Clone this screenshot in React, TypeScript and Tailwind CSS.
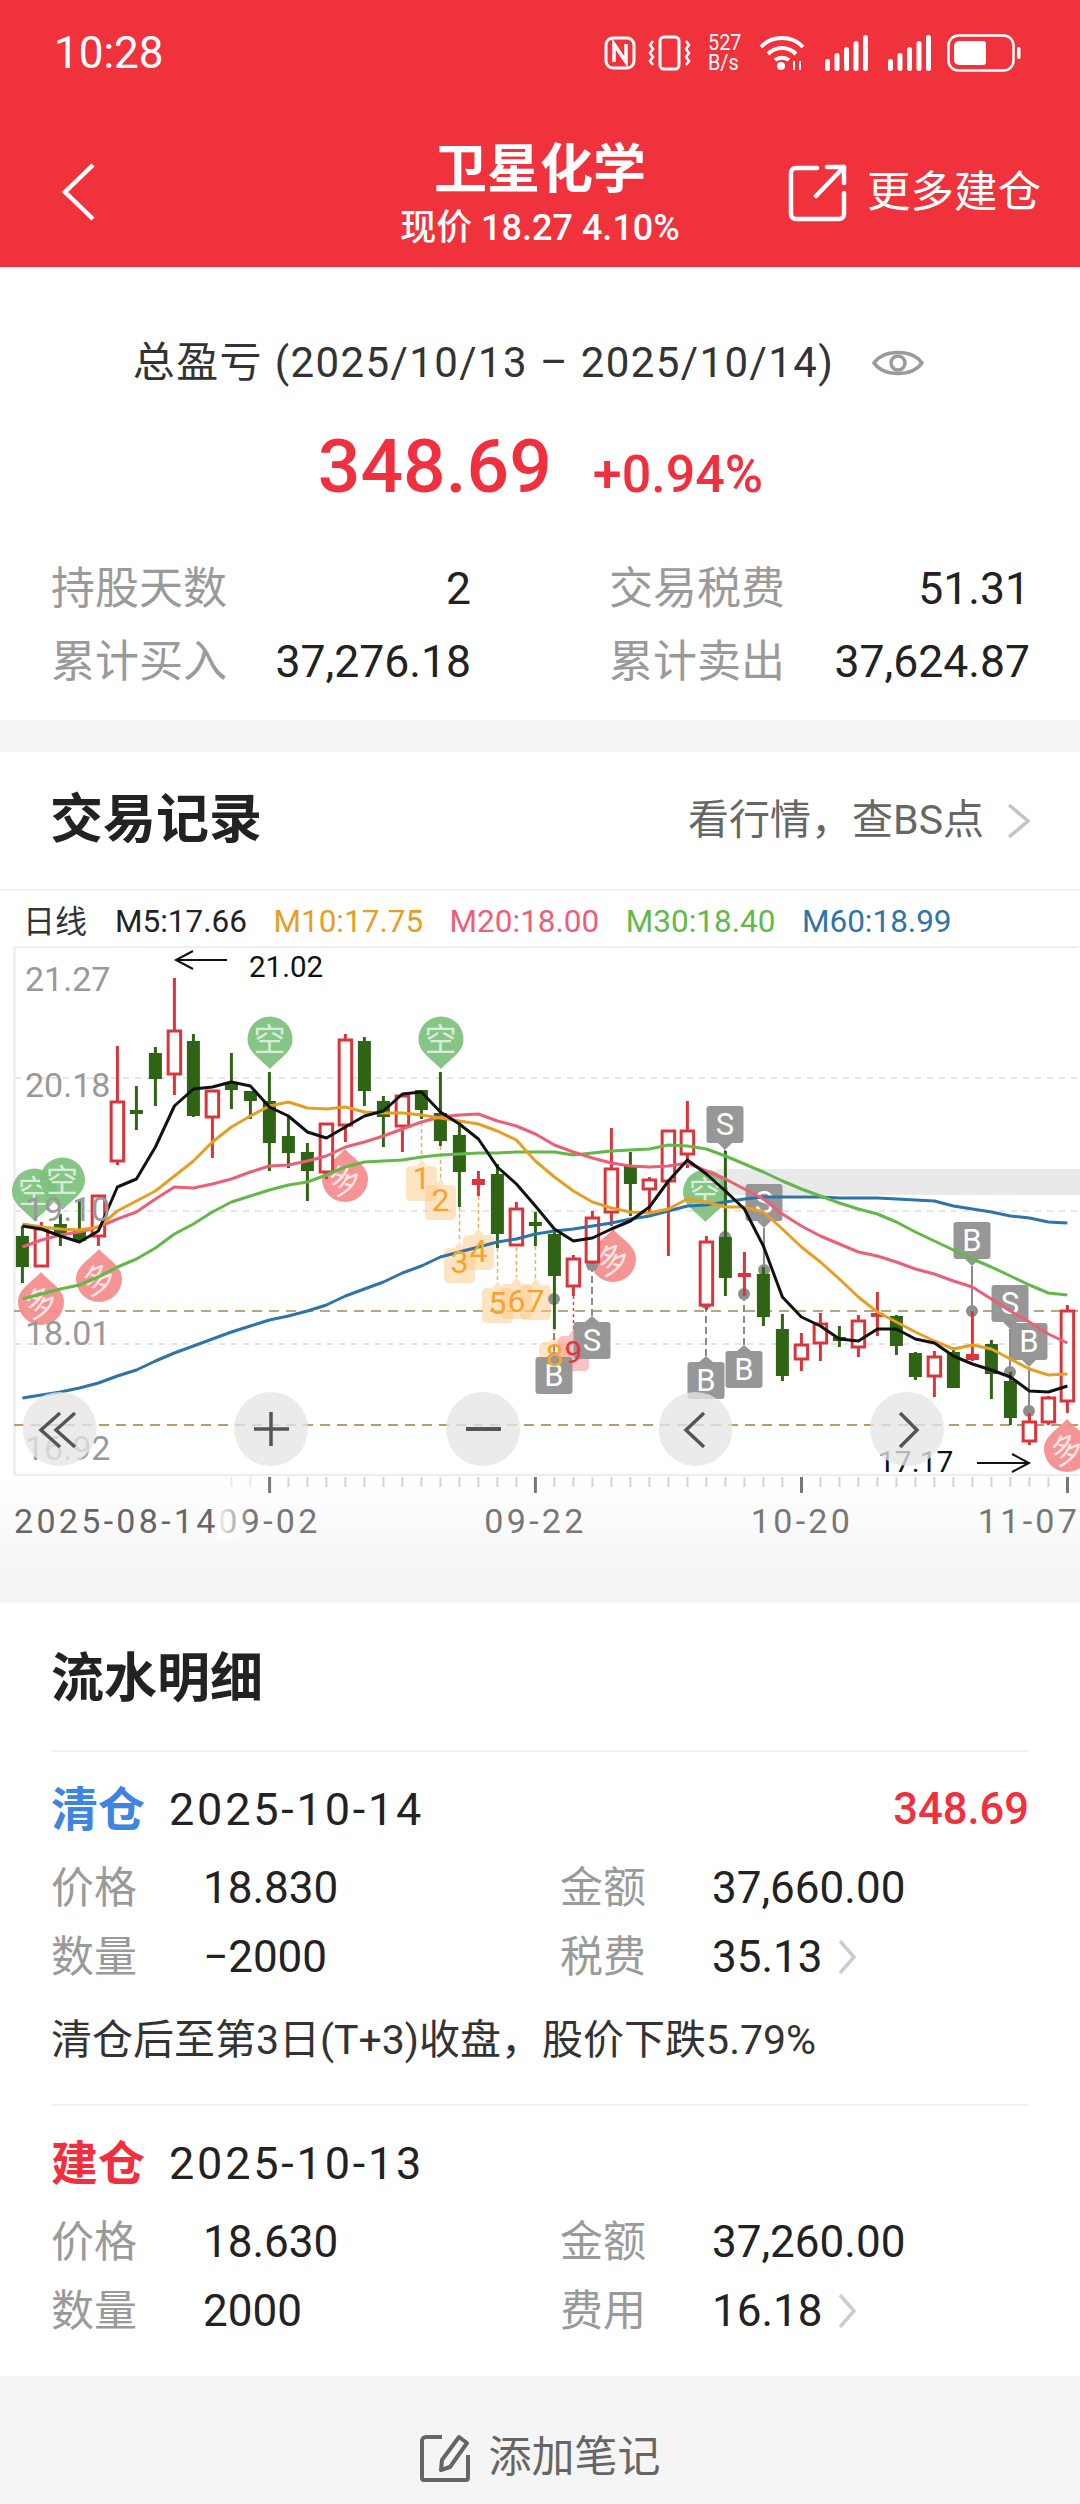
import React from 'react';

type Candle = [number, number, number, number, 'r' | 'g'];

// high, body top, body bottom, low, colour — one entry per trading day
const candles: Candle[] = [
  [1227, 1237, 1268, 1284, 'g'], [1223, 1230, 1267, 1267, 'r'], [1215, 1225, 1235, 1247, 'g'], [1202, 1230, 1242, 1243, 'g'],
  [1197, 1197, 1237, 1247, 'r'], [1047, 1103, 1162, 1166, 'r'], [1087, 1111, 1115, 1131, 'g'], [1048, 1054, 1080, 1107, 'g'],
  [979, 1032, 1075, 1096, 'r'], [1035, 1042, 1117, 1118, 'g'], [1092, 1092, 1118, 1159, 'r'], [1054, 1085, 1091, 1110, 'g'],
  [1092, 1092, 1102, 1120, 'g'], [1073, 1102, 1144, 1172, 'g'], [1118, 1137, 1154, 1169, 'g'], [1144, 1153, 1172, 1202, 'g'],
  [1125, 1125, 1173, 1180, 'r'], [1035, 1041, 1126, 1143, 'r'], [1038, 1042, 1092, 1107, 'g'], [1097, 1102, 1118, 1148, 'g'],
  [1097, 1097, 1127, 1153, 'r'], [1091, 1091, 1111, 1120, 'g'], [1073, 1114, 1142, 1147, 'g'], [1122, 1136, 1173, 1208, 'g'],
  [1172, 1180, 1186, 1197, 'r'], [1165, 1175, 1235, 1249, 'g'], [1203, 1210, 1246, 1247, 'r'], [1213, 1223, 1227, 1247, 'g'],
  [1230, 1235, 1277, 1330, 'g'], [1256, 1260, 1287, 1297, 'r'], [1212, 1219, 1263, 1265, 'r'], [1129, 1170, 1213, 1227, 'r'],
  [1153, 1167, 1185, 1217, 'g'], [1178, 1181, 1190, 1213, 'r'], [1132, 1132, 1182, 1257, 'r'], [1102, 1132, 1155, 1169, 'r'],
  [1237, 1243, 1306, 1311, 'r'], [1152, 1238, 1279, 1297, 'g'], [1253, 1274, 1278, 1297, 'r'], [1268, 1275, 1318, 1327, 'g'],
  [1315, 1330, 1377, 1382, 'g'], [1334, 1346, 1360, 1372, 'r'], [1314, 1325, 1344, 1362, 'r'], [1327, 1338, 1342, 1348, 'g'],
  [1316, 1322, 1348, 1358, 'r'], [1293, 1314, 1318, 1337, 'r'], [1316, 1317, 1347, 1356, 'g'], [1353, 1354, 1378, 1381, 'g'],
  [1352, 1358, 1377, 1398, 'r'], [1348, 1353, 1389, 1389, 'g'], [1312, 1355, 1361, 1362, 'r'], [1341, 1345, 1375, 1400, 'g'],
  [1373, 1382, 1419, 1426, 'g'], [1414, 1423, 1442, 1446, 'r'], [1397, 1399, 1423, 1426, 'r'], [1306, 1312, 1402, 1414, 'r'],
];

const dayX = (i: number) => 22.4 + 19 * i;

const ma5 = [1227, 1230, 1237, 1243, 1232, 1188, 1180, 1148, 1107, 1090, 1088, 1083, 1087, 1108, 1117, 1133, 1139, 1128, 1117, 1112, 1095, 1093, 1113, 1125, 1140, 1168, 1185, 1207, 1230, 1242, 1239, 1230, 1222, 1208, 1182, 1161, 1175, 1192, 1210, 1247, 1298, 1318, 1327, 1340, 1342, 1330, 1330, 1340, 1344, 1357, 1365, 1371, 1378, 1392, 1393, 1387];
const ma10 = [1225, 1228, 1230, 1231, 1228, 1212, 1202, 1192, 1177, 1162, 1143, 1128, 1117, 1107, 1103, 1109, 1110, 1108, 1113, 1114, 1114, 1116, 1119, 1122, 1125, 1132, 1141, 1162, 1178, 1192, 1203, 1209, 1213, 1214, 1210, 1200, 1203, 1208, 1208, 1213, 1230, 1248, 1263, 1280, 1298, 1313, 1323, 1333, 1342, 1350, 1346, 1350, 1360, 1370, 1376, 1375];
const ma20 = [1248, 1241, 1236, 1233, 1228, 1220, 1213, 1200, 1188, 1189, 1185, 1180, 1173, 1167, 1166, 1162, 1157, 1148, 1143, 1137, 1130, 1123, 1118, 1116, 1115, 1122, 1127, 1135, 1146, 1153, 1159, 1164, 1167, 1168, 1167, 1164, 1172, 1180, 1190, 1200, 1215, 1227, 1237, 1245, 1253, 1257, 1263, 1270, 1275, 1282, 1288, 1300, 1312, 1323, 1335, 1344];
const ma30 = [1300, 1295, 1290, 1286, 1278, 1268, 1260, 1249, 1235, 1225, 1213, 1203, 1197, 1191, 1186, 1183, 1176, 1168, 1163, 1162, 1161, 1158, 1156, 1155, 1154, 1154, 1153, 1153, 1153, 1156, 1154, 1152, 1151, 1150, 1146, 1147, 1150, 1157, 1165, 1173, 1182, 1190, 1197, 1204, 1210, 1215, 1223, 1233, 1242, 1251, 1260, 1268, 1277, 1286, 1294, 1296];
const ma60 = [1399, 1396, 1393, 1389, 1384, 1377, 1371, 1362, 1354, 1347, 1340, 1333, 1327, 1321, 1317, 1312, 1306, 1297, 1290, 1283, 1274, 1267, 1258, 1253, 1248, 1243, 1240, 1235, 1232, 1230, 1227, 1224, 1220, 1217, 1212, 1207, 1206, 1203, 1200, 1198, 1198, 1198, 1198, 1199, 1199, 1199, 1200, 1201, 1202, 1207, 1210, 1213, 1217, 1219, 1223, 1224];

const maLines: [number[], string][] = [
  [ma60, '#2f74a8'],
  [ma30, '#62b948'],
  [ma20, '#ec5f78'],
  [ma10, '#e5a024'],
  [ma5, '#111111'],
];

const points = (ys: number[]) => ys.map((y, i) => `${dayX(i)},${y}`).join(' ');

const priceLabels: [string, number][] = [['21.27', 992], ['20.18', 1098], ['19.10', 1222], ['18.01', 1346], ['16.92', 1461]];
const orderTags: [string, number, number, number, number][] = [
  // label, x, tag top, line start, text baseline
  ['1', 421.5, 1160, 1123, 1190],
  ['2', 440.5, 1179, 1147, 1212],
  ['3', 459.5, 1242, 1208, 1274],
  ['4', 478.5, 1229, 1197, 1263],
  ['5', 497.5, 1282, 1249, 1315],
  ['6', 516.5, 1278, 1248, 1313],
  ['7', 535.5, 1279, 1247, 1313],
  ['8', 554.5, 1336, 1300, 1367],
];

// grey buy/sell flags: label, x, box top, anchor dot y, pointer direction
const flags: [string, number, number, number, 'up' | 'down'][] = [
  ['S', 725, 1107, 1238, 'down'],
  ['S', 764, 1185, 1271, 'down'],
  ['S', 592, 1323, 1266, 'up'],
  ['B', 554, 1358, 1300, 'up'],
  ['B', 706, 1363, 1304, 'up'],
  ['B', 744, 1352, 1295, 'up'],
  ['B', 972, 1223, 1312, 'down'],
  ['S', 1010, 1286, 1373, 'down'],
  ['B', 1029, 1324, 1412, 'down'],
];

const shortPins: [number, number][] = [[34, 1192], [62, 1181], [269.5, 1040], [440.5, 1040], [705, 1193]];
const longPins: [number, number][] = [[41, 1303], [99, 1280], [345, 1180], [613, 1260], [1067, 1450]];

const sans = "font-[Roboto,'Noto_Sans_CJK_SC',sans-serif]";

const StatusIcons: React.FC = () => (
  <div className="mt-[6px] flex items-center text-white">
    <svg width="32" height="34" viewBox="0 0 32 34" fill="none" stroke="currentColor" strokeWidth="3">
      <rect x="2" y="2" width="28" height="30" rx="7" />
      <path d="M10 26V8l12 18V8" strokeWidth="3.5" />
    </svg>
    <svg className="ml-3" width="43" height="36" viewBox="0 0 43 36" fill="none" stroke="currentColor" strokeWidth="3">
      <rect x="12" y="2" width="19" height="32" rx="4" />
      <path d="M5 6l-3 4 3 4-3 4 3 4-3 4 3 4M38 6l3 4-3 4 3 4-3 4 3 4-3 4" strokeWidth="2.5" />
    </svg>
    <div className="ml-[17px] w-9 text-[22px] leading-[20px] font-[Roboto,sans-serif] font-normal scale-x-90 origin-left">
      <div>527</div>
      <div>B/s</div>
    </div>
    <svg className="ml-[15px]" width="46" height="36" viewBox="0 0 46 36" fill="none" stroke="currentColor" strokeWidth="4">
      <path d="M2 12C13 0 33 0 44 12M9 19c8-8 20-8 28 0M16 25c4-3 10-3 14 0" />
      <circle cx="22" cy="31" r="4" fill="currentColor" stroke="none" />
      <path d="M35 26v9M41 26v9" strokeWidth="2" />
    </svg>
    <svg className="ml-[20px]" width="44" height="36" viewBox="0 0 44 36" fill="currentColor">
      <rect x="0" y="24" width="5" height="12" rx="2.5" />
      <rect x="9.5" y="18" width="5" height="18" rx="2.5" />
      <rect x="19" y="12" width="5" height="24" rx="2.5" />
      <rect x="28.5" y="6" width="5" height="30" rx="2.5" />
      <rect x="38" y="0" width="5" height="36" rx="2.5" />
    </svg>
    <svg className="ml-[19px]" width="44" height="36" viewBox="0 0 44 36" fill="currentColor">
      <rect x="0" y="24" width="5" height="12" rx="2.5" />
      <rect x="9.5" y="18" width="5" height="18" rx="2.5" />
      <rect x="19" y="12" width="5" height="24" rx="2.5" />
      <rect x="28.5" y="6" width="5" height="30" rx="2.5" />
      <rect x="38" y="0" width="5" height="36" rx="2.5" />
    </svg>
    <svg className="ml-[15px]" width="74" height="38" viewBox="0 0 74 38" fill="none">
      <rect x="1.5" y="1.5" width="65" height="35" rx="10" stroke="currentColor" strokeWidth="2.5" />
      <path d="M12 7h24a3 3 0 0 1 3 3v18a3 3 0 0 1-3 3H12a5 5 0 0 1-5-5V12a5 5 0 0 1 5-5z" fill="currentColor" />
      <rect x="70" y="13" width="3.5" height="12" rx="1.7" fill="currentColor" />
    </svg>
  </div>
);

const Header: React.FC = () => (
  <header className="h-[267px] bg-[#f0323c] text-white">
    <div className="flex h-[100px] items-center justify-between pl-[54px] pr-[59px]">
      <span className="mt-[5px] text-[44px] leading-none font-[Roboto,sans-serif]">10:28</span>
      <StatusIcons />
    </div>
    <div className="grid h-[167px] grid-cols-[1fr_auto_1fr] items-start">
      <div className="pl-[60px] pt-[62px]">
        <svg width="36" height="60" viewBox="0 0 36 60" fill="none" stroke="white" strokeWidth="4.5">
          <path d="M33 3L5 30l28 27" />
        </svg>
      </div>
      <div className="flex flex-col items-center pt-[41px]">
        <div className="text-[53px] leading-[58px] font-bold">卫星化学</div>
        <div className="mt-[9px] text-[36px] leading-[40px] font-medium whitespace-nowrap">现价 18.27 4.10%</div>
      </div>
      <div className="flex items-center justify-end pr-[39px] pt-[63px]">
        <svg width="60" height="60" viewBox="0 0 60 60" fill="none" stroke="white" strokeWidth="4.5" strokeLinecap="round" strokeLinejoin="round">
          <path d="M30 5H9a5 5 0 0 0-5 5v41a5 5 0 0 0 5 5h43a5 5 0 0 0 5-5V30M57 4L29 33M40 4h17v16" />
        </svg>
        <span className="ml-[20px] text-[43.5px] leading-[60px] whitespace-nowrap">更多建仓</span>
      </div>
    </div>
  </header>
);

const StatRow: React.FC<{ label: string; value: string }> = ({ label, value }) => (
  <div className="flex items-center justify-between leading-[60px]">
    <span className="text-[44px] text-[#9a9a9a]">{label}</span>
    <span className="text-[44.5px] text-[#222]">{value}</span>
  </div>
);

const Summary: React.FC = () => (
  <section className="h-[453px] bg-white px-[51px] pt-[71px]">
    <div className="flex items-center justify-center pr-[23px] leading-[50px]">
      <span className="text-[42px] tracking-[1.4px] text-[#333] whitespace-nowrap">总盈亏 (2025/10/13 – 2025/10/14)</span>
      <svg className="ml-[38px]" width="52" height="38" viewBox="0 0 52 38" fill="none" stroke="#9a9a9a" strokeWidth="3.5">
        <path d="M2 19C12 5 40 5 50 19 40 33 12 33 2 19z" />
        <circle cx="26" cy="19" r="7" />
      </svg>
    </div>
    <div className="mt-[38px] flex items-baseline justify-center pl-[1px] leading-[80px] text-[#f0303f] font-medium">
      <span className="text-[75px]">348.69</span>
      <span className="ml-[41px] text-[52px]">+0.94%</span>
    </div>
    <div className="mt-[44px] grid grid-cols-[420px_421px] gap-x-[138px] gap-y-[13px]">
      <StatRow label="持股天数" value="2" />
      <StatRow label="交易税费" value="51.31" />
      <StatRow label="累计买入" value="37,276.18" />
      <StatRow label="累计卖出" value="37,624.87" />
    </div>
  </section>
);

const PinText: React.FC<{ x: number; y: number; fill: string; rotate?: number; children: string }> = ({ x, y, fill, rotate = 0, children }) => (
  <text x={x} y={y} fill={fill} fontSize="32" textAnchor="middle" fontFamily="'Noto Sans CJK SC',sans-serif" transform={`rotate(${rotate} ${x} ${y - 11})`}>
    {children}
  </text>
);

const KLineChart: React.FC = () => (
  <svg className="block" width="1080" height="625" viewBox="0 947 1080 625" fontFamily="Roboto,sans-serif">
    <defs>
      <linearGradient id="axisFade" x1="0" y1="0" x2="0" y2="1">
        <stop offset="0" stopColor="#ffffff" />
        <stop offset="1" stopColor="#f6f6f6" />
      </linearGradient>
      <linearGradient id="dateFade" x1="0" y1="0" x2="1" y2="0">
        <stop offset="0" stopColor="#ffffff" stopOpacity="0.9" />
        <stop offset="1" stopColor="#ffffff" stopOpacity="0" />
      </linearGradient>
    </defs>
    <rect x="0" y="1477" width="1080" height="95" fill="url(#axisFade)" />
    <rect x="716" y="1170" width="364" height="26" fill="#e9e9e9" />
    <path d="M1079 948H14.5V1476H1079" fill="none" stroke="#eeeeee" strokeWidth="2.5" />

    {[1079, 1212, 1345].map((y) => (
      <line key={y} x1="15" x2="1080" y1={y} y2={y} stroke="#dddddd" strokeWidth="1.5" strokeDasharray="6 6" />
    ))}
    <line x1="14" x2="1080" y1="1312" y2="1312" stroke="#bba67f" strokeWidth="2" strokeDasharray="10 7" />
    <line x1="14" x2="1080" y1="1426" y2="1426" stroke="#bf9a62" strokeWidth="2" strokeDasharray="10 7" />

    {/* order tags */}
    {orderTags.map(([label, x, top, lineStart]) => (
      <g key={label}>
        <line x1={x} x2={x} y1={lineStart} y2={top} stroke="#e8b05a" strokeWidth="1.5" strokeDasharray="4 3" />
        <path d={`M${x - 15.5} ${top + 12}q0-5 5-5h5.5l5-7 5 7h5.5q5 0 5 5v25q0 5-5 5h-21q-5 0-5-5z`} fill="#ffc98a" fillOpacity="0.5" />
      </g>
    ))}
    <line x1="573.5" x2="573.5" y1="1297" y2="1330" stroke="#c04a4a" strokeWidth="1.5" strokeDasharray="3 3" />
    <path d="M558 1342q0-5 5-5h5.5l5-7 5 7h5.5q5 0 5 5v25q0 5-5 5h-21q-5 0-5-5z" fill="#f79a9a" fillOpacity="0.6" />

    {/* short / long signal pins */}
    {shortPins.map(([x, y]) => (
      <g key={x}>
        <path d={`M${x - 22} ${y}a22.5 22.5 0 1 1 45 0c0 13-12 19-22.5 30-10.5-11-22.5-17-22.5-30z`} fill="#7cc07c" fillOpacity="0.92" />
        <PinText x={x} y={y + 12} fill="#d6edd6">空</PinText>
      </g>
    ))}
    {longPins.map(([x, y]) => (
      <g key={x}>
        <path d={`M${x - 23} ${y}a23 23 0 1 0 46 0c0-13-13-19-23-30-10 11-23 17-23 30z`} fill="#f48b8b" fillOpacity="0.92" />
        <PinText x={x} y={y + 12} fill="#ffe6e6" rotate={-22}>多</PinText>
      </g>
    ))}

    {/* grey buy / sell flags */}
    {flags.map(([label, x, top, dot, dir], i) => {
      const lineFrom = dir === 'down' ? top + 44 : top - 6;
      const tip = dir === 'down' ? `M${x - 7} ${top + 37}h14l-7 7z` : `M${x - 7} ${top}h14l-7 -6z`;
      return (
        <g key={i}>
          <line x1={x} x2={x} y1={lineFrom} y2={dot} stroke="#8a8a8a" strokeWidth="2" strokeDasharray={dir === 'up' ? '7 4' : undefined} />
          <circle cx={x} cy={dot} r="6" fill="#8f8f8f" />
          <path d={tip} fill="#949494" />
          <rect x={x - 18.5} y={top} width="37" height="37" rx="3" fill="#949494" fillOpacity="0.97" />
          <text x={x} y={top + 29} fill="#ffffff" fontSize="31" textAnchor="middle">{label}</text>
        </g>
      );
    })}

    {/* daily candles */}
    {candles.map(([high, top, bottom, low, dir], i) => {
      const x = dayX(i);
      const color = dir === 'r' ? '#d9363c' : '#2f6414';
      const doji = bottom - top < 8;
      return (
        <g key={i}>
          <line x1={x} x2={x} y1={high} y2={low} stroke={color} strokeWidth="3" />
          {dir === 'g' || doji ? (
            <rect x={x - 6.5} y={top} width="13" height={bottom - top} fill={color} />
          ) : (
            <rect x={x - 6.25} y={top} width="12.5" height={bottom - top} fill="#ffffff" stroke={color} strokeWidth="3" />
          )}
        </g>
      );
    })}

    {maLines.map(([ys, color]) => (
      <polyline key={color} points={points(ys)} fill="none" stroke={color} strokeWidth="3" strokeLinejoin="round" />
    ))}

    {orderTags.map(([label, x, , , base]) => (
      <text key={label} x={x} y={base} fill="#f5a52c" fontSize="32" textAnchor="middle">{label}</text>
    ))}
    <text x="573.5" y="1364" fill="#e8323c" fontSize="32" textAnchor="middle">9</text>

    {/* extreme value marks */}
    <path d="M227 961H176M193 952l-17 9 17 9" fill="none" stroke="#111" strokeWidth="2" />
    <text x="249" y="978" fill="#111" fontSize="29.5">21.02</text>
    <text x="878" y="1473" fill="#111" fontSize="30">17.17</text>
    <path d="M977 1464H1029M1012 1455l17 9-17 9" fill="none" stroke="#111" strokeWidth="2" />

    {priceLabels.map(([label, base]) => (
      <text key={label} x="25" y={base} fill="#999999" fontSize="34">{label}</text>
    ))}

    {/* zoom and pan buttons */}
    {[59.5, 271, 483, 695.5, 907].map((x) => (
      <circle key={x} cx={x} cy="1430" r="37" fill="#e6e6e6" fillOpacity="0.78" />
    ))}
    <g fill="none" stroke="#555555" strokeWidth="3.5">
      <path d="M60 1414l-19 17 19 17M75 1414l-19 17 19 17" />
      <path d="M254 1430h35M271 1413v34" />
      <path d="M466 1430h35" strokeWidth="4" />
      <path d="M704 1414l-18 17 18 17" />
      <path d="M900 1414l17 17-17 17" />
    </g>

    {/* date axis */}
    {Array.from({ length: 45 }, (_, n) => dayX(n + 11)).map((x, n) => (
      <line key={x} x1={x} x2={x} y1="1478" y2="1488" stroke="#d4d4d4" strokeWidth="2" opacity={n < 2 ? 0.5 : 1} />
    ))}
    {[269.6, 535.4, 801.5, 1067.5].map((x) => (
      <line key={x} x1={x} x2={x} y1="1478" y2="1494" stroke="#777777" strokeWidth="3" />
    ))}
    <g fill="#777777" fontSize="34" letterSpacing="3.3" textAnchor="middle">
      <text x="269.5" y="1534">09-02</text>
      <text x="535.5" y="1534">09-22</text>
      <text x="802" y="1534">10-20</text>
      <text x="1029" y="1534">11-07</text>
    </g>
    <rect x="218" y="1500" width="34" height="40" fill="url(#dateFade)" />
    <text x="14" y="1534" fill="#666666" fontSize="34" letterSpacing="3.3">2025-08-14</text>
  </svg>
);

const legend: [string, string][] = [
  ['M5:17.66', 'text-[#222]'],
  ['M10:17.75', 'text-[#e5a024]'],
  ['M20:18.00', 'text-[#ec5f78]'],
  ['M30:18.40', 'text-[#62b948]'],
  ['M60:18.99', 'text-[#2f74a8]'],
];

const TradeRecord: React.FC = () => (
  <section className="mt-[32px] bg-white">
    <div className="flex h-[139px] items-center justify-between border-b-2 border-[#f2f2f2] pl-[50px] pr-[48px]">
      <h2 className="text-[53px] font-bold text-[#222]">交易记录</h2>
      <div className="flex items-center">
        <span className="text-[41px] text-[#666]">{'看行情\uFF0C查BS点'}</span>
        <svg className="ml-[22px]" width="26" height="38" viewBox="0 0 26 38" fill="none" stroke="#c4c4c4" strokeWidth="3.5">
          <path d="M3 3l19 16L3 35" />
        </svg>
      </div>
    </div>
    <div className="flex h-[55px] items-center whitespace-nowrap pl-[23px] pt-[7px] text-[31.5px] leading-none">
      <span className="w-[92px] text-[32px] text-[#333]">日线</span>
      {legend.map(([text, color]) => (
        <span key={text} className={`mr-[26.5px] font-[Roboto,sans-serif] ${color}`}>{text}</span>
      ))}
    </div>
    <KLineChart />
  </section>
);

const Cell: React.FC<{ label: string; value: string; more?: boolean }> = ({ label, value, more }) => (
  <>
    <span className="text-[43px] text-[#9a9a9a]">{label}</span>
    <span className="flex items-center text-[44px] text-[#222]">
      {value}
      {more && (
        <svg className="ml-[14px]" width="20" height="36" viewBox="0 0 20 36" fill="none" stroke="#cccccc" strokeWidth="3.5">
          <path d="M3 2l14 16L3 34" />
        </svg>
      )}
    </span>
  </>
);

const Entry: React.FC<{
  kind: string;
  kindColor: string;
  date: string;
  profit?: string;
  rows: [string, string, string, string];
  lastLabel: string;
  topPad: string;
  note?: string;
}> = ({ kind, kindColor, date, profit, rows, lastLabel, topPad, note }) => (
  <div className={topPad}>
    <div className="flex items-center justify-between leading-[60px]">
      <div className="flex items-center">
        <span className={`text-[47px] font-bold ${kindColor}`}>{kind}</span>
        <span className="ml-[24px] text-[45px] tracking-[2.8px] text-[#222]">{date}</span>
      </div>
      {profit && <span className="text-[43.5px] font-medium text-[#f0303f]">{profit}</span>}
    </div>
    <div className="mt-[18px] grid grid-cols-[152px_357px_152px_1fr] items-center gap-y-[9px] leading-[60px]">
      <Cell label="价格" value={rows[0]} />
      <Cell label="金额" value={rows[1]} />
      <Cell label="数量" value={rows[2]} />
      <Cell label={lastLabel} value={rows[3]} more />
    </div>
    {note && <p className="mt-[23px] text-[41px] leading-[60px] text-[#333]">{note}</p>}
  </div>
);

const FlowDetail: React.FC = () => (
  <section className="mt-[32px] bg-white px-[51px] pb-[35px]">
    <h2 className="flex h-[149px] items-center border-b-2 border-[#f2f2f2] pt-[6px] text-[53px] font-bold text-[#222]">流水明细</h2>
    <div className="border-b-2 border-[#f2f2f2] pb-[34px]">
      <Entry
        kind="清仓"
        kindColor="text-[#3d85e0]"
        date="2025-10-14"
        profit="348.69"
        rows={['18.830', '37,660.00', '−2000', '35.13']}
        lastLabel="税费"
        topPad="pt-[28px]"
        note={'清仓后至第3日(T+3)收盘\uFF0C股价下跌5.79%'}
      />
    </div>
    <Entry
      kind="建仓"
      kindColor="text-[#f0303f]"
      date="2025-10-13"
      rows={['18.630', '37,260.00', '2000', '16.18']}
      lastLabel="费用"
      topPad="pt-[28px]"
    />
  </section>
);

const App: React.FC = () => (
  <div className={`h-[2504px] w-[1080px] overflow-hidden bg-[#f5f5f5] ${sans}`}>
    <Header />
    <Summary />
    <TradeRecord />
    <FlowDetail />
    <button className="flex h-[127px] w-full items-center justify-center pt-[36px] text-[43px] text-[#666]">
      <svg className="mr-[19px]" width="50" height="48" viewBox="0 0 50 48" fill="none" stroke="#666666" strokeWidth="4" strokeLinejoin="round">
        <path d="M22 3H6a4 4 0 0 0-4 4v37a2 2 0 0 0 2 2h42a2 2 0 0 0 2-2V21" />
        <path d="M39 3l8 6-17 24-9 3 1-10z" />
      </svg>
      添加笔记
    </button>
  </div>
);

export default App;
